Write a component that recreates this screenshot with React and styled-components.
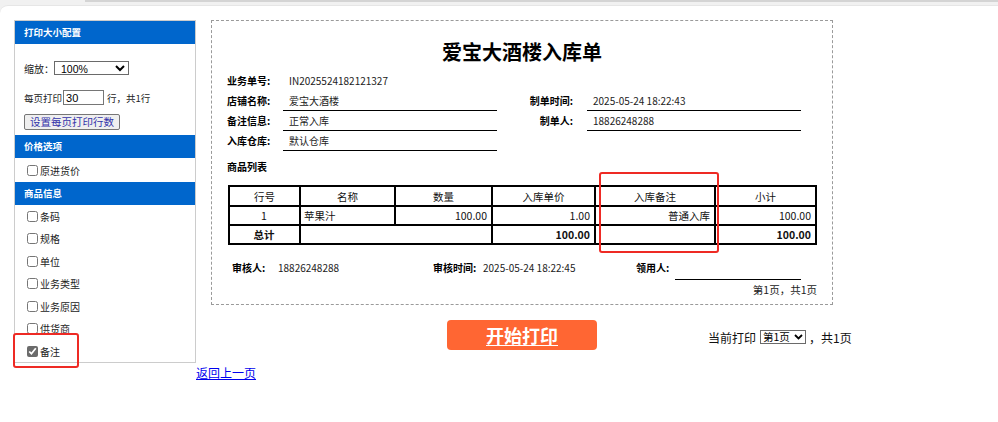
import React from "react";
import styled, { createGlobalStyle } from "styled-components";

const Global = createGlobalStyle`
  html, body { margin: 0; padding: 0; }
  body {
    background: #f1f1f1;
    font-family: "Noto Sans CJK SC", "Noto Sans", sans-serif;
    color: #000;
  }
`;

const TopStrip = styled.div`
  height: 5px;
  padding-left: 85px;
  box-sizing: border-box;
`;
const TopLine = styled.div`
  height: 2px;
  background: #d4d4d4;
`;

const Page = styled.div`
  background: #fff;
  border-top: 1px solid #e6e6e6;
  border-top-left-radius: 8px;
  min-height: calc(100vh - 5px);
  box-sizing: border-box;
  padding: 14px 0 0 14px;
  display: grid;
  grid-template-columns: 182px 1fr;
  grid-template-rows: auto auto;
  align-content: start;
  align-items: start;
`;

const Panel = styled.div`
  position: relative;
  width: 182px;
  height: 343px;
  box-sizing: border-box;
  border: 1px solid #ccc;
  font-size: 10px;
  color: #222;
`;

const SectionHeader = styled.div`
  height: 23px;
  line-height: 23px;
  background: #0066cc;
  color: #fff;
  font-weight: bold;
  font-size: 9.5px;
  padding-left: 9px;
`;

const SizeSection = styled.div`
  height: 91px;
  box-sizing: border-box;
  padding: 17px 9px 0;
`;

const FieldRow = styled.div`
  display: flex;
  align-items: center;
  height: ${(p) => p.$h}px;
  margin-top: ${(p) => p.$mt || 0}px;
  white-space: nowrap;
  font-size: ${(p) => p.$fs || 10}px;
`;

const ZoomSelect = styled.select`
  width: 75px;
  height: 14px;
  font-size: 10.5px;
  padding: 0 0 0 2px;
  border: 1px solid #6a6a6a;
  border-radius: 0;
  background: #fff;
  color: #000;
  font-family: "Liberation Sans", Arial, sans-serif;
`;

const RowsInput = styled.input`
  width: 41px;
  height: 15px;
  box-sizing: border-box;
  font-size: 11px;
  padding: 0 2px;
  margin: 0 3px 0 1px;
  border: 1px solid #767676;
  font-family: "Liberation Sans", Arial, sans-serif;
`;

const SetButton = styled.button`
  height: 16px;
  margin-top: 9px;
  padding: 0 5px;
  font-size: 10.5px;
  line-height: 14px;
  font-family: "Noto Sans CJK SC", sans-serif;
  color: #3333aa;
  background: #efefef;
  border: 1px solid #767676;
  border-radius: 2px;
`;

const CheckSection = styled.div`
  padding-top: ${(p) => p.$pt || 0}px;
`;

const CheckItem = styled.label`
  display: flex;
  align-items: center;
  height: ${(p) => p.$h || 22.5}px;
  padding-left: 12px;
  font-size: 10px;
  color: #222;
`;

const Check = styled.input`
  width: 11px;
  height: 11px;
  margin: 0 2px 0 0;
  accent-color: #6b6b6b;
`;

const Annotation = styled.div`
  position: absolute;
  left: ${(p) => p.$l}px;
  top: ${(p) => p.$t}px;
  width: ${(p) => p.$w}px;
  height: ${(p) => p.$h}px;
  box-sizing: border-box;
  border: 2px solid #ee2a24;
  border-radius: 3px;
  pointer-events: none;
`;

const Main = styled.div`
  padding-left: 15px;
`;

const Sheet = styled.div`
  position: relative;
  width: 622px;
  box-sizing: border-box;
  border: 1px dashed #9a9a9a;
  padding: 17px 15px 6px 15px;
`;

const Title = styled.h1`
  margin: 0;
  height: 28px;
  line-height: 28px;
  text-align: center;
  font-size: 20px;
  font-weight: bold;
`;

const InfoGrid = styled.div`
  margin-top: 5px;
  display: grid;
  grid-template-columns: 56px 214px 90px 214px;
  grid-auto-rows: 20px;
  font-size: 10px;
`;

const InfoLabel = styled.div`
  font-weight: bold;
  line-height: 20px;
  text-align: ${(p) => (p.$right ? "right" : "left")};
  padding-right: ${(p) => (p.$right ? 14 : 0)}px;
  white-space: nowrap;
`;

const InfoValue = styled.div`
  line-height: 19px;
  padding-left: 6px;
  color: #222;
  border-bottom: 1px solid ${(p) => (p.$line ? "#000" : "transparent")};
  white-space: nowrap;
`;

const ListTitle = styled.div`
  margin-top: 8px;
  height: 16px;
  line-height: 16px;
  font-weight: bold;
  font-size: 10px;
`;

const Table = styled.table`
  margin: 10px 0 0 1px;
  width: 587px;
  border-collapse: collapse;
  table-layout: fixed;
  font-size: 10.5px;
`;

const Cell = styled.td`
  border: 2px solid #000;
  height: 17px;
  padding: 0 4px 0 3px;
  line-height: 15px;
  text-align: ${(p) => p.$align || "center"};
  font-weight: ${(p) => (p.$bold ? "bold" : "normal")};
  color: #111;
  white-space: nowrap;
`;

const HeadCell = styled.th`
  border: 2px solid #000;
  height: 18px;
  padding: 0;
  font-weight: normal;
  line-height: 15px;
  color: #111;
`;

const FooterRow = styled.div`
  margin-top: 13px;
  display: flex;
  align-items: flex-start;
  height: 22px;
  padding-left: 5px;
  font-size: 10px;
`;

const FooterGroup = styled.div`
  display: flex;
  width: ${(p) => (p.$w ? `${p.$w}px` : "auto")};
  line-height: 20px;
`;

const FooterLabel = styled.span`
  font-weight: bold;
  width: ${(p) => p.$w}px;
  white-space: nowrap;
`;

const FooterValue = styled.span`
  color: #222;
  white-space: nowrap;
`;

const SignLine = styled.div`
  width: 126px;
  height: 21px;
  border-bottom: 1px solid #000;
`;

const PageCount = styled.div`
  margin-top: 2px;
  height: 16px;
  line-height: 16px;
  text-align: right;
  font-size: 10.5px;
  color: #222;
`;

const Actions = styled.div`
  width: 622px;
  margin-top: 15px;
  display: grid;
  grid-template-columns: minmax(0, 1fr) 150px minmax(0, 1fr);
  align-items: center;
`;

const PrintButton = styled.button`
  grid-column: 2;
  height: 30px;
  width: 150px;
  border: none;
  border-radius: 4px;
  background: #ff6633;
  color: #fff;
  font-size: 18px;
  font-weight: bold;
  text-decoration: underline;
  text-underline-offset: 2px;
  font-family: "Noto Sans CJK SC", sans-serif;
  padding: 0;
  line-height: 30px;
`;

const PagerInfo = styled.div`
  grid-column: 3;
  padding-left: 111px;
  margin-top: 4px;
  display: flex;
  align-items: center;
  white-space: nowrap;
  font-size: 12px;
  color: #111;
`;

const SelectWrap = styled.span`
  position: relative;
  display: inline-flex;
  margin: 0 3px 0 4px;
`;

const PageSelect = styled.select`
  appearance: none;
  -webkit-appearance: none;
  height: 14px;
  width: 46px;
  box-sizing: border-box;
  font-size: 10.5px;
  line-height: 12px;
  padding: 0 0 0 2px;
  border: 1px solid #6a6a6a;
  border-radius: 0;
  font-family: "Noto Sans CJK SC", sans-serif;
  color: #000;
  background: #fff;
`;

const Chevron = styled.svg`
  position: absolute;
  right: 3px;
  top: 4px;
  width: 9px;
  height: 6px;
  pointer-events: none;
`;

const BackLink = styled.a`
  grid-column: 2;
  margin-top: 2px;
  font-size: 12px;
  line-height: 15px;
  color: #0000ee;
  text-decoration: underline;
  justify-self: start;
`;

const productFlags = ["条码", "规格", "单位", "业务类型", "业务原因", "供货商", "备注"];

export default function App() {
  return (
    <>
      <Global />
      <TopStrip>
        <TopLine />
      </TopStrip>
      <Page>
        <Panel>
          <SectionHeader>打印大小配置</SectionHeader>
          <SizeSection>
            <FieldRow $h={14}>
              缩放：
              <ZoomSelect defaultValue="100%">
                <option>100%</option>
                <option>90%</option>
                <option>80%</option>
              </ZoomSelect>
            </FieldRow>
            <FieldRow $h={15} $mt={15} $fs={9.5}>
              每页打印
              <RowsInput defaultValue="30" />
              行，共1行
            </FieldRow>
            <SetButton>设置每页打印行数</SetButton>
          </SizeSection>
          <SectionHeader>价格选项</SectionHeader>
          <CheckSection>
            <CheckItem $h={24}>
              <Check type="checkbox" />
              原进货价
            </CheckItem>
          </CheckSection>
          <SectionHeader>商品信息</SectionHeader>
          <CheckSection>
            {productFlags.map((f) => (
              <CheckItem key={f}>
                <Check type="checkbox" defaultChecked={f === "备注"} />
                {f}
              </CheckItem>
            ))}
          </CheckSection>
          <Annotation $l={-2} $t={312} $w={66} $h={35} />
        </Panel>

        <Main>
          <Sheet>
            <Title>爱宝大酒楼入库单</Title>
            <InfoGrid>
              <InfoLabel>业务单号:</InfoLabel>
              <InfoValue>IN2025524182121327</InfoValue>
              <div />
              <div />
              <InfoLabel>店铺名称:</InfoLabel>
              <InfoValue $line>爱宝大酒楼</InfoValue>
              <InfoLabel $right>制单时间:</InfoLabel>
              <InfoValue $line>2025-05-24 18:22:43</InfoValue>
              <InfoLabel>备注信息:</InfoLabel>
              <InfoValue $line>正常入库</InfoValue>
              <InfoLabel $right>制单人:</InfoLabel>
              <InfoValue $line>18826248288</InfoValue>
              <InfoLabel>入库仓库:</InfoLabel>
              <InfoValue $line>默认仓库</InfoValue>
            </InfoGrid>
            <ListTitle>商品列表</ListTitle>
            <Table>
              <colgroup>
                <col style={{ width: 71 }} />
                <col style={{ width: 95 }} />
                <col style={{ width: 97 }} />
                <col style={{ width: 103 }} />
                <col style={{ width: 120 }} />
                <col style={{ width: 101 }} />
              </colgroup>
              <thead>
                <tr>
                  <HeadCell>行号</HeadCell>
                  <HeadCell>名称</HeadCell>
                  <HeadCell>数量</HeadCell>
                  <HeadCell>入库单价</HeadCell>
                  <HeadCell>入库备注</HeadCell>
                  <HeadCell>小计</HeadCell>
                </tr>
              </thead>
              <tbody>
                <tr>
                  <Cell>1</Cell>
                  <Cell $align="left">苹果汁</Cell>
                  <Cell $align="right">100.00</Cell>
                  <Cell $align="right">1.00</Cell>
                  <Cell $align="right">普通入库</Cell>
                  <Cell $align="right">100.00</Cell>
                </tr>
                <tr>
                  <Cell $bold>总计</Cell>
                  <Cell colSpan={2} />
                  <Cell $align="right" $bold>100.00</Cell>
                  <Cell />
                  <Cell $align="right" $bold>100.00</Cell>
                </tr>
              </tbody>
            </Table>
            <FooterRow>
              <FooterGroup $w={201}>
                <FooterLabel $w={46}>审核人:</FooterLabel>
                <FooterValue>18826248288</FooterValue>
              </FooterGroup>
              <FooterGroup $w={203}>
                <FooterLabel $w={50}>审核时间:</FooterLabel>
                <FooterValue>2025-05-24 18:22:45</FooterValue>
              </FooterGroup>
              <FooterGroup>
                <FooterLabel $w={39}>领用人:</FooterLabel>
                <SignLine />
              </FooterGroup>
            </FooterRow>
            <PageCount>第1页，共1页</PageCount>
            <Annotation $l={387} $t={151} $w={120} $h={81} />
          </Sheet>
          <Actions>
            <PrintButton>开始打印</PrintButton>
            <PagerInfo>
              当前打印
              <SelectWrap>
                <PageSelect defaultValue="1">
                  <option value="1">第1页</option>
                </PageSelect>
                <Chevron viewBox="0 0 9 6">
                  <path d="M1 1 L4.5 4.5 L8 1" fill="none" stroke="#000" strokeWidth="1.8" />
                </Chevron>
              </SelectWrap>
              ，共1页
            </PagerInfo>
          </Actions>
        </Main>
        <BackLink href="#">返回上一页</BackLink>
      </Page>
    </>
  );
}
